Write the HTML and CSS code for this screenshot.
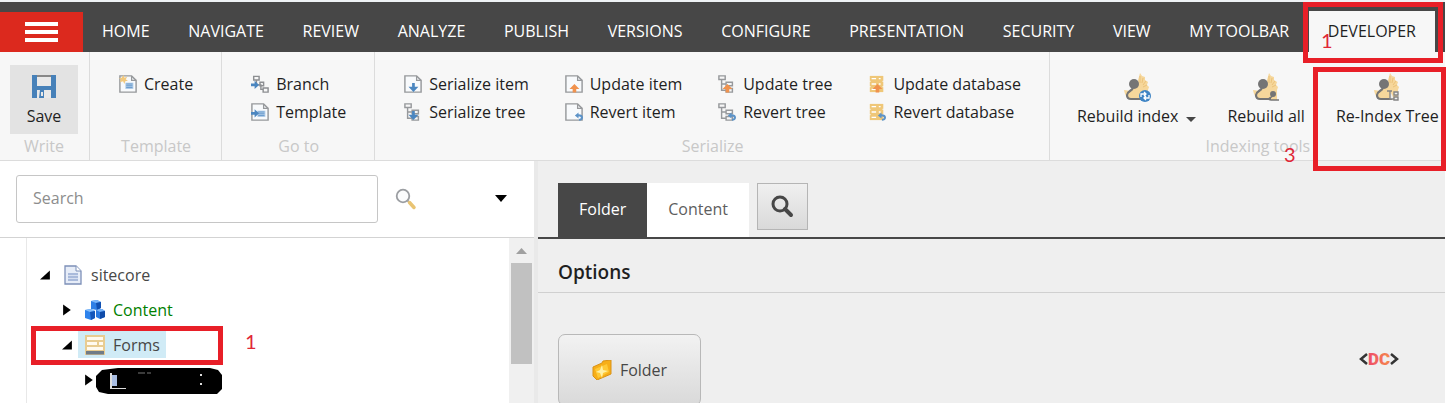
FILE: index.html
```html
<!DOCTYPE html>
<html lang="en">
<head>
  <meta charset="UTF-8">
  <title>Content Editor</title>
  <link rel="stylesheet" href="styles.css">
</head>
<body>
  <!-- shared icon shapes -->
  <svg class="defs" aria-hidden="true">
    <symbol id="doc" viewBox="0 0 20 20">
      <path d="M1 1h13l5 5v13H1z" fill="#f8fafc" stroke="#97999c" stroke-width="1.6"/>
      <path d="M14 1v5h5" fill="none" stroke="#97999c" stroke-width="1.4"/>
    </symbol>
    <symbol id="nodes" viewBox="0 0 20 20">
      <path d="M1 1h7v4H1zM9 8h7v4H9zM9 15h7v4H9zM4 5v12h5M4 10h5" fill="none" stroke="#97999c" stroke-width="1.6"/>
    </symbol>
    <symbol id="db" viewBox="0 0 20 20">
      <path d="M2 1h15v18H2z" fill="#efc778"/>
      <path d="M4 4h5M4 10h5M4 16h5M12 4h2M12 10h2" stroke="#fff" stroke-width="1.6"/>
      <path d="M1 7h2M1 13h2M16 7h2M16 13h2" stroke="#f7f7f7" stroke-width="1"/>
    </symbol>
    <symbol id="down" viewBox="0 0 20 20">
      <path d="M9 9h3v4h4l-5.500 6L5 13h4z" fill="#4b86c0"/>
    </symbol>
    <symbol id="up" viewBox="0 0 20 20">
      <path d="M10.500 10l5.500 5.500h-3.500v4h-4v-4H5z" fill="#f0924e"/>
    </symbol>
    <symbol id="undo" viewBox="0 0 20 20">
      <path d="M11 14l4-3.500v2c3 0 5 1.200 5 3.700s-2 3.500-4.500 3.500v-2c1.500 0 2.200-.600 2.200-1.500s-1-1.300-2.700-1.300v2.200z" fill="#5c93c8"/>
    </symbol>
    <symbol id="index" viewBox="0 0 30 30">
      <path d="M18 1l2 3 3 1v3l3 2-1 3 2 2-1 3v10H9c-3-1-6-4-7-10l7 1 6-7z" fill="#f6d79b"/>
      <path d="M18 4v7m3-5l-1 5m4-2l-3 4m4 0l-4 2" stroke="#ebc27a" stroke-width="1"/>
      <circle cx="12" cy="12" r="5" fill="#757575"/>
      <path d="M11 15c0 4-6 4-6 8 0 3 2 4 4 4h11" fill="none" stroke="#757575" stroke-width="2.200"/>
    </symbol>
  </svg>

  <div class="page">
    <header class="topbar">
      <button class="menu" aria-label="Menu"><span></span><span></span><span></span></button>
      <nav class="tabs">
        <button>HOME</button>
        <button>NAVIGATE</button>
        <button>REVIEW</button>
        <button>ANALYZE</button>
        <button>PUBLISH</button>
        <button>VERSIONS</button>
        <button>CONFIGURE</button>
        <button>PRESENTATION</button>
        <button>SECURITY</button>
        <button>VIEW</button>
        <button>MY TOOLBAR</button>
        <button class="active">DEVELOPER</button>
      </nav>
    </header>

    <div class="ribbon">
      <section class="group write">
        <button class="big save">
          <svg width="24" height="24" viewBox="0 0 24 24"><path d="M0 1h5v10h14V1h5v23H0z" fill="#4781b9"/><path d="M5 1h14v2H5z" fill="#888"/><path d="M5 3h14v9H5z" fill="#e9e9e9"/><path d="M5 16h14v8H5z" fill="#e9e9e9"/><path d="M8 16h4v8H7z" fill="#4781b9"/><path d="M9 18h2v4H9z" fill="#e9e9e9"/></svg>
          <span>Save</span>
        </button>
        <h2>Write</h2>
      </section>

      <section class="group">
        <div class="columns">
          <div class="column">
            <button class="small"><svg viewBox="0 0 20 20"><use href="#doc"/><path d="M7 8.500h9v7H7z" fill="#b5cfe9"/><path d="M8 10h7M8 12h7M8 14h7" stroke="#5c93c8"/><path d="M5 0l1 3 3-1-1.500 3L10 6 7 7l-1 3-1.500-3L1 8l1-3-2-1.500 3-.500z" fill="#f2c97d"/></svg>Create</button>
          </div>
        </div>
        <h2>Template</h2>
      </section>

      <section class="group">
        <div class="columns">
          <div class="column">
            <button class="small"><svg viewBox="0 0 20 20"><path d="M3 1.500h6v4H3zM6 6v5h5v5h3M13.500 14.500h5.500v4.500h-5.500zM10 8h4v4h-4z" fill="none" stroke="#8d8f92" stroke-width="1.600"/><path d="M0 9.500h4v-3l5 4.500-5 4.500v-3H0z" fill="#4b86c0"/></svg>Branch</button>
            <button class="small"><svg viewBox="0 0 20 20"><use href="#doc"/><path d="M7 8.500h9v7H7z" fill="#b5cfe9"/><path d="M8 10h7M8 12h7M8 14h7" stroke="#5c93c8"/><path d="M0 10h4V7l5 4.500L4 16v-3H0z" fill="#4b86c0"/></svg>Template</button>
          </div>
        </div>
        <h2>Go to</h2>
      </section>

      <section class="group">
        <div class="columns">
          <div class="column">
            <button class="small"><svg viewBox="0 0 20 20"><use href="#doc"/><use href="#down"/></svg>Serialize item</button>
            <button class="small"><svg viewBox="0 0 20 20"><use href="#nodes"/><use href="#down"/></svg>Serialize tree</button>
          </div>
          <div class="column">
            <button class="small"><svg viewBox="0 0 20 20"><use href="#doc"/><use href="#up"/></svg>Update item</button>
            <button class="small"><svg viewBox="0 0 20 20"><use href="#doc"/><use href="#undo"/></svg>Revert item</button>
          </div>
          <div class="column">
            <button class="small"><svg viewBox="0 0 20 20"><use href="#nodes"/><use href="#up"/></svg>Update tree</button>
            <button class="small"><svg viewBox="0 0 20 20"><use href="#nodes"/><use href="#undo"/></svg>Revert tree</button>
          </div>
          <div class="column">
            <button class="small"><svg viewBox="0 0 20 20"><use href="#db"/><use href="#up"/></svg>Update database</button>
            <button class="small"><svg viewBox="0 0 20 20"><use href="#db"/><use href="#undo"/></svg>Revert database</button>
          </div>
        </div>
        <h2>Serialize</h2>
      </section>

      <section class="group indexing">
        <div class="columns">
          <button class="big">
            <svg width="30" height="30" viewBox="0 0 30 30"><use href="#index"/><circle cx="23" cy="24" r="6" fill="#3f84c4"/><path d="M19 25v-3h5m-2-2l2 2-2 2M27 23v3h-5m2-2l-2 2 2 2" fill="none" stroke="#fff" stroke-width="1.300"/></svg>
            <span>Rebuild index<i class="caret"></i></span>
          </button>
          <button class="big">
            <svg width="30" height="30" viewBox="0 0 30 30"><use href="#index"/><circle cx="22" cy="22" r="3" fill="#757575"/><path d="M21 24c0 2-3 1-3 3 0 1 1 1 2 1h8" fill="none" stroke="#757575" stroke-width="1.600"/></svg>
            <span>Rebuild all</span>
          </button>
          <button class="big">
            <svg width="30" height="30" viewBox="0 0 30 30"><use href="#index"/><path d="M15 19h5M18 19v8h4M22 20h4v3h-4zM22 25h4v3h-4z" fill="#eee" stroke="#858585" stroke-width="1.400"/></svg>
            <span>Re-Index Tree</span>
          </button>
        </div>
        <h2>Indexing tools</h2>
      </section>
    </div>

    <main class="workspace">
      <aside class="sidebar">
        <form class="search">
          <input type="text" placeholder="Search" aria-label="Search">
          <button type="button" class="plain glass" aria-label="Search"><svg width="22" height="22" viewBox="0 0 22 22"><circle cx="8" cy="8" r="6.300" fill="#fbfcfd" stroke="#9b9ea2" stroke-width="1.800"/><path d="M12.500 12.500l3 3" stroke="#a5a5a5" stroke-width="2"/><path d="M14.500 14.500l4.500 5" stroke="#e9c473" stroke-width="3.500" stroke-linecap="round"/></svg></button>
          <button type="button" class="plain" aria-label="Search options"><svg width="14" height="8" viewBox="0 0 14 8"><path d="M1 0h12L7 7z"/></svg></button>
        </form>
        <div class="treebox">
          <ul class="tree">
            <li class="level1">
              <svg class="arrow" viewBox="0 0 10 10"><path d="M9 1v8H0z"/></svg>
              <a href="#"><svg viewBox="0 0 20 20"><path d="M2 1h11l5 5v13H2z" fill="#e7edf8" stroke="#7d90b8" stroke-width="1.300"/><path d="M13 1v5h5" fill="#fff" stroke="#7d90b8"/><path d="M5 8h10v8H5z" fill="#a9badb"/><path d="M5 10.500h10M5 13.500h10" stroke="#d5def0"/></svg>sitecore</a>
            </li>
            <li class="level2">
              <svg class="arrow" viewBox="0 0 10 10"><path d="M1 0v10l7-5z"/></svg>
              <a href="#" class="changed"><svg viewBox="0 0 20 20"><path d="M6 1l6-1 4 2v6l-4 2-6-1z" fill="#2f7fe6"/><path d="M6 1l6-1 4 2-5 1z" fill="#7db7fa"/><path d="M11 3l5-1v6l-4 2z" fill="#1150b2"/><path d="M0 10l6-1 4 2v7l-4 2-6-2z" fill="#2e83ec"/><path d="M0 10l6-1 4 2-5 1z" fill="#85befb"/><path d="M5 12l5-1v7l-4 2z" fill="#1356ba"/><path d="M11 10l6-1 3 2v6l-5 2-4-2z" fill="#2878e0"/><path d="M11 10l6-1 3 2-5 1z" fill="#74b1f8"/><path d="M15 12l5-1v6l-5 2z" fill="#104ba9"/></svg>Content</a>
            </li>
            <li class="level2">
              <svg class="arrow" viewBox="0 0 10 10"><path d="M9 1v8H0z"/></svg>
              <a href="#" class="selected"><svg viewBox="0 0 20 20"><path d="M0 0h20v20H0z" fill="#e8cc91"/><path d="M2 2h16v3H2zM2 7h10v3H2zM14 7h4v3h-4zM2 12h16v3H2z" fill="#fffaf0"/><path d="M1 16h18v3.500H1z" fill="#6f7b87"/></svg>Forms</a>
            </li>
            <li class="level3">
              <svg class="arrow" viewBox="0 0 10 10"><path d="M1 0v10l7-5z"/></svg>
              <svg class="hidden-item" viewBox="0 0 126 31"><path d="M6 6l16-2h92l8 2 4 5v14l-5 5H12l-9-2-3-5V12z"/><path d="M14 9v16h16v-1H16V9z" fill="#ddd"/><path d="M16 11h5v11h-5z" fill="#a8bde2"/><path d="M42 9h7M51 9h4" stroke="#777"/><path d="M104 10h2v2h-2zM104 19h2v2h-2z" fill="#ddd"/></svg>
            </li>
          </ul>
          <div class="scrollbar"><svg width="11" height="6" viewBox="0 0 11 6"><path d="M5.500 0L11 6H0z" fill="#a0a0a0"/></svg><div class="thumb"></div></div>
        </div>
      </aside>

      <section class="editor">
        <div class="editor-tabs">
          <button class="tab active">Folder</button>
          <button class="tab">Content</button>
          <button class="find" aria-label="Find"><svg width="24" height="24" viewBox="0 0 24 24"><circle cx="10" cy="9" r="7" fill="none" stroke="#474747" stroke-width="3"/><path d="M15 14l6 6" stroke="#474747" stroke-width="4" stroke-linecap="round"/></svg></button>
        </div>
        <h1>Options</h1>
        <div class="options">
          <button class="option"><svg width="20" height="20" viewBox="0 0 20 20"><path d="M1 7l9-4 1-2 8-1v14l-7 3-7 3-4-4z" fill="#f7ae18" stroke="#d99216"/><path d="M3 9l12-5 2 8-11 6z" fill="#ffc936"/><path d="M10 5l1 5 5 1-5 2-1 5-2-5-4-1 4-2z" fill="#fff0a6"/></svg>Folder</button>
          <svg class="logo" width="40" height="24" viewBox="0 0 40 24" role="img" aria-label="DC">
            <defs><linearGradient id="warm"><stop offset="0" stop-color="#ee4b6a"/><stop offset="1" stop-color="#f58a4b"/></linearGradient></defs>
            <path d="M8 7l-6 5 6 5M32 7l6 5-6 5" fill="none" stroke="#343434" stroke-width="2.500"/>
            <text x="20" y="18" text-anchor="middle" fill="url(#warm)" class="logo-text">DC</text>
          </svg>
        </div>
      </section>
    </main>

    <!-- step marks over the interface -->
    <div class="mark mark-tab"></div>
    <div class="mark mark-reindex"></div>
    <div class="mark mark-forms"></div>
    <span class="step step-tab">1</span>
    <span class="step step-reindex">3</span>
    <span class="step step-forms">1</span>
  </div>
</body>
</html>
```
FILE: styles.css
```css
* {
  box-sizing: border-box;
}
body {
  margin: 0;
  font-family: "Open Sans", sans-serif;
  font-size: 16px;
  line-height: 24px;
  color: #1f1f1f;
  background: #fff;
}
button {
  font: inherit;
  color: inherit;
  background: none;
  border: none;
  padding: 0;
  cursor: pointer;
  white-space: nowrap;
}
svg {
  display: block;
  flex: none;
}
.defs {
  position: absolute;
  width: 0;
  height: 0;
}
.page {
  position: relative;
  display: flex;
  flex-direction: column;
  height: 100vh;
  padding-right: 2px;
  overflow: hidden;
}

/* top bar */
.topbar {
  display: flex;
  flex: none;
  align-items: flex-end;
  border-top: 2px solid #eff2f5;
  background: #474747;
  padding: 9px 10px 0 0;
}
.menu {
  display: flex;
  flex: none;
  flex-direction: column;
  align-items: center;
  justify-content: center;
  gap: 4px;
  width: 83px;
  height: 40px;
  background: #dc291e;
}
.menu span {
  width: 33px;
  height: 4px;
  background: #fff;
}
.tabs {
  display: flex;
  flex: 1;
  justify-content: space-between;
}
.tabs button {
  height: 41px;
  padding: 0 19px 2px;
  color: #fff;
}
.tabs .active {
  background: #f7f7f7;
  color: #1f1f1f;
}

/* ribbon */
.ribbon {
  display: flex;
  flex: none;
  background: #f7f7f7;
  border-bottom: 1px solid #dcdcdc;
  overflow: hidden;
}
.group {
  display: flex;
  flex: none;
  flex-direction: column;
  justify-content: space-between;
  height: 108px;
  padding: 18px 28px 2px 29px;
  border-right: 1px solid #dcdcdc;
}
.group h2 {
  margin: 0;
  font-size: 16px;
  font-weight: 400;
  text-align: center;
  color: #c8c8c8;
}
.columns {
  display: flex;
  gap: 36px;
}
.small {
  display: flex;
  align-items: center;
  gap: 7px;
  height: 28px;
}
.small svg {
  width: 18px;
  height: 20px;
}
.big {
  display: flex;
  flex-direction: column;
  align-items: center;
}
.write {
  padding: 13px 11px 2px 10px;
}
.save {
  width: 68px;
  height: 70px;
  padding-top: 9px;
  gap: 6px;
  background: #e3e3e3;
}
.indexing {
  padding: 20px 27px 2px;
}
.indexing .columns {
  gap: 31px;
}
.indexing .big {
  gap: 2px;
}
.caret {
  display: inline-block;
  margin-left: 8px;
  border: 5px solid transparent;
  border-top-color: #474747;
  border-bottom: none;
}

/* content tree */
.workspace {
  display: flex;
  flex: 1;
  min-height: 0;
}
.sidebar {
  display: flex;
  flex: 0 0 538px;
  flex-direction: column;
  background: #fff;
  border-right: 4px solid #e9e9e9;
}
.search {
  display: flex;
  align-items: center;
  height: 77px;
  padding: 0 26px 0 16px;
  border-bottom: 1px solid #d3d3d3;
}
.search input {
  flex: 1;
  min-width: 0;
  height: 48px;
  padding: 0 16px 2px;
  font: inherit;
  border: 1px solid #c6c6c6;
  border-radius: 3px;
}
.search input::placeholder {
  color: #8d8d8d;
}
.glass {
  margin: 0 77px 0 17px;
}
.treebox {
  display: flex;
  flex: 1;
  min-height: 0;
  margin-left: 26px;
  border-left: 1px solid #e8e8e8;
}
.tree {
  flex: 1;
  margin: 0;
  padding: 19px 0 0;
  list-style: none;
}
.tree li {
  display: flex;
  align-items: center;
  height: 35px;
}
.tree a {
  display: flex;
  align-items: center;
  gap: 7px;
  height: 27px;
  margin-left: 4px;
  padding: 0 6px;
  color: #474747;
  text-decoration: none;
}
.tree a svg {
  width: 22px;
  height: 20px;
}
.arrow {
  width: 11px;
  height: 12px;
  margin-right: 1px;
}
.level1 {
  padding-left: 13px;
}
.level2 {
  padding-left: 35px;
}
.level3 {
  padding-left: 57px;
}
.tree .changed {
  color: #008000;
}
.tree .selected {
  background: #d0ebf6;
}
.hidden-item {
  width: 126px;
  height: 31px;
}
.scrollbar {
  display: flex;
  flex-direction: column;
  align-items: center;
  gap: 9px;
  width: 25px;
  padding-top: 10px;
  background: #f0f0f0;
}
.thumb {
  width: 21px;
  height: 101px;
  background: #c1c1c1;
}

/* editor pane */
.editor {
  flex: 1;
  min-width: 0;
  background: #efefef;
}
.editor-tabs {
  display: flex;
  padding: 22px 20px 0;
  border-bottom: 2px solid #474747;
}
.tab {
  height: 54px;
  padding: 0 21px 2px;
  background: #fff;
  color: #5e5e5e;
}
.tab.active {
  background: #474747;
  color: #fff;
  font-weight: 500;
}
.find {
  display: flex;
  align-items: center;
  justify-content: center;
  width: 51px;
  height: 47px;
  margin-left: 8px;
  border: 1px solid #b5b5b5;
  background: linear-gradient(#f0f0f0, #d9d9d9);
}
.editor h1 {
  margin: 0;
  padding: 21px 20px 8px;
  font-size: 19px;
  font-weight: 600;
  line-height: 24px;
  color: #1f1f1f;
  border-bottom: 1px solid #d0d0d0;
}
.options {
  display: flex;
  align-items: flex-start;
  justify-content: space-between;
  padding: 41px 46px 0 20px;
}
.option {
  display: flex;
  align-items: center;
  justify-content: center;
  gap: 8px;
  width: 143px;
  height: 72px;
  color: #474747;
  border: 1px solid #b8b8b8;
  border-radius: 7px;
  background: linear-gradient(#f2f2f2, #d9d9d9);
}
.logo {
  margin-top: 13px;
  overflow: visible;
}
.logo-text {
  font-family: Roboto, sans-serif;
  font-size: 17px;
  font-weight: 900;
}

/* step marks */
.mark {
  position: absolute;
  border: 5px solid #e81f28;
}
.mark-tab {
  left: 1303px;
  top: 2px;
  width: 140px;
  height: 61px;
}
.mark-reindex {
  left: 1313px;
  top: 67px;
  width: 133px;
  height: 104px;
}
.mark-forms {
  left: 31px;
  top: 326px;
  width: 192px;
  height: 39px;
}
.step {
  position: absolute;
  font-family: Lato, sans-serif;
  font-size: 20px;
  color: #e02737;
}
.step-tab {
  left: 1321px;
  top: 28px;
}
.step-reindex {
  left: 1284px;
  top: 142px;
}
.step-forms {
  left: 245px;
  top: 329px;
}
```
